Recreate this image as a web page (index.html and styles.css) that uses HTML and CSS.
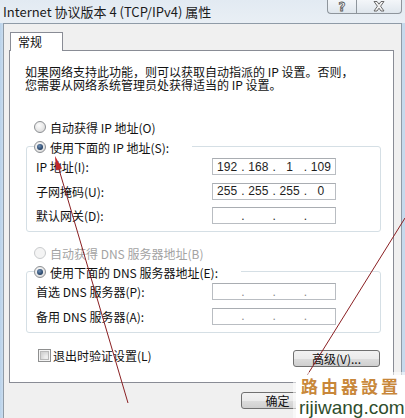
FILE: index.html
```html
<!DOCTYPE html>
<html lang="zh-CN">
<head>
    <meta charset="UTF-8">
    <meta name="viewport" content="width=device-width, initial-scale=1.0">
    <title>Internet 协议版本 4 (TCP/IPv4) 属性</title>
    <link rel="stylesheet" href="styles.css">
</head>
<body>

<div class="window">

    <!-- Title bar -->
    <div class="titlebar">
        <span class="title">Internet 协议版本 4 (TCP/IPv4) 属性</span>
        <div class="caption-btns">
            <span class="cap-btn help">?</span>
            <span class="cap-btn close">
                <svg width="12" height="11" viewBox="0 0 12 11">
                    <path d="M1 0.5 L4 0.5 L6 3.2 L8 0.5 L11 0.5 L7.6 5.2 L11 10 L8 10 L6 7.2 L4 10 L1 10 L4.4 5.2 Z" fill="#f2f2f2" stroke="#5c5c5c" stroke-width="0.9"/>
                </svg>
            </span>
        </div>
    </div>

    <div class="frame">
        <div class="tabs"><span class="tab">常规</span></div>

        <div class="panel">
            <p class="intro">如果网络支持此功能，则可以获取自动指派的 IP 设置。否则，<br>您需要从网络系统管理员处获得适当的 IP 设置。</p>

            <div class="choice">
                <span class="radio"></span>自动获得 IP 地址(O)
            </div>

            <!-- Manual IP group -->
            <div class="group">
                <div class="group-head">
                    <span class="radio checked"></span>使用下面的 IP 地址(S):
                </div>
                <div class="field first">
                    <span>IP 地址(I):</span>
                    <div class="ip"><span>192</span><i>.</i><span>168</span><i>.</i><span>1</span><i>.</i><span>109</span></div>
                </div>
                <div class="field">
                    <span>子网掩码(U):</span>
                    <div class="ip"><span>255</span><i>.</i><span>255</span><i>.</i><span>255</span><i>.</i><span>0</span></div>
                </div>
                <div class="field">
                    <span>默认网关(D):</span>
                    <div class="ip"><span></span><i>.</i><span></span><i>.</i><span></span><i>.</i><span></span></div>
                </div>
            </div>

            <div class="choice dns-auto disabled">
                <span class="radio"></span>自动获得 DNS 服务器地址(B)
            </div>

            <!-- Manual DNS group -->
            <div class="group dns">
                <div class="group-head">
                    <span class="radio checked"></span>使用下面的 DNS 服务器地址(E):
                </div>
                <div class="field first">
                    <span>首选 DNS 服务器(P):</span>
                    <div class="ip empty"><span></span><i>.</i><span></span><i>.</i><span></span><i>.</i><span></span></div>
                </div>
                <div class="field">
                    <span>备用 DNS 服务器(A):</span>
                    <div class="ip empty"><span></span><i>.</i><span></span><i>.</i><span></span><i>.</i><span></span></div>
                </div>
            </div>

            <div class="bottom-row">
                <label class="check"><span class="box"></span>退出时验证设置(L)</label>
                <button class="btn adv">高级(V)...</button>
            </div>
        </div>

        <!-- the cancel button sits under the watermark -->
        <div class="footer">
            <button class="btn">确定</button>
            <button class="btn" aria-label="取消"></button>
        </div>
    </div>

    <!-- Annotation arrows drawn over the screenshot -->
    <svg class="arrows" width="405" height="418" viewBox="0 0 405 418">
        <line x1="58" y1="166" x2="128" y2="403" stroke="#8a1f22" stroke-width="1"/>
        <polygon points="55,156 62,168.6 56,170.3" fill="#c0282a"/>
        <line x1="405" y1="218" x2="298" y2="390" stroke="#8a1f22" stroke-width="1"/>
    </svg>

    <!-- Site watermark -->
    <div class="watermark">
        <span class="wm-cn">路由器設置</span>
        <span class="wm-en">rijiwang.com</span>
    </div>

</div>

</body>
</html>
```

FILE: styles.css
```css
* {
    box-sizing: border-box;
}

body {
    margin: 0;
    font-family: "Noto Sans CJK SC", "Noto Sans CJK TC", sans-serif;
    font-size: 12px;
    color: #111;
}

/* Window with glass edges */
.window {
    position: relative;
    width: 405px;
    height: 418px;
    overflow: hidden;
    background: linear-gradient(90deg, #b9d2ea 0, #c9dcef 3px, #e8eef4 3px, #e8eef4 402px, #c6d9ec 402px);
}

/* Title bar */
.titlebar {
    display: flex;
    align-items: flex-start;
    height: 23px;
    padding-left: 3px;
    background: linear-gradient(180deg, #e2eaf2, #e9eff5);
}

.title {
    font-size: 13px;
    line-height: 24px;
    color: #1b1b1b;
}

.caption-btns {
    display: flex;
    margin-left: auto;
    margin-right: 3px;
}

.cap-btn {
    display: flex;
    align-items: center;
    justify-content: center;
    height: 14px;
    border: 1px solid #8e959c;
    border-top: none;
    background: linear-gradient(180deg, #f3f6f9, #dfe6ed);
}

.cap-btn.help {
    width: 29px;
    border-right: none;
    border-radius: 0 0 0 4px;
    font-family: "DejaVu Sans", sans-serif;
    font-size: 12px;
    font-weight: bold;
    line-height: 14px;
    color: #f4f4f4;
    -webkit-text-stroke: 0.8px #555;
}

.cap-btn.close {
    width: 46px;
    border-radius: 0 0 4px 0;
}

/* Dialog frame */
.frame {
    margin: 0 3px;
    height: 400px;
    padding: 8px 7px 0 5px;
    background: #f0f0f0;
    border: 1px solid #8f9ba7;
}

.tabs {
    display: flex;
}

.tab {
    position: relative;
    z-index: 1;
    width: 53px;
    height: 19px;
    margin: 0 0 -1px 1px;
    padding: 1px 0 0 7px;
    line-height: 15px;
    background: #fff;
    border: 1px solid #898c95;
    border-bottom: none;
}

.panel {
    padding: 14px 12px 15px 15px;
    background: #fff;
    border: 1px solid #898c95;
}

.intro {
    margin: 0;
    line-height: 13px;
    white-space: nowrap;
}

/* Radio rows */
.choice,
.group-head {
    display: flex;
    align-items: center;
    gap: 4px;
    height: 16px;
    white-space: nowrap;
}

.choice {
    margin-top: 28px;
    padding-left: 9px;
}

.choice.dns-auto {
    margin-top: 13px;
}

.disabled {
    color: #a3a3a3;
}

.radio {
    position: relative;
    width: 12px;
    height: 12px;
    border-radius: 50%;
    border: 1px solid #8c8f93;
    background: radial-gradient(circle at 40% 35%, #fdfdfd, #dcdcdc 80%);
}

.disabled .radio {
    border-color: #c9cbcd;
    background: #f4f4f4;
}

.radio.checked::after {
    content: "";
    position: absolute;
    left: 2px;
    top: 2px;
    width: 6px;
    height: 6px;
    border-radius: 50%;
    background: radial-gradient(circle at 40% 35%, #6f8fb5, #1d3a5e 75%);
}

/* Group boxes */
.group {
    margin: 11px 0 0 1px;
    padding: 0 9px 7px;
    border: 1px solid #d5dfe5;
    border-radius: 3px;
}

.group.dns {
    margin-top: 10px;
}

.group-head {
    width: fit-content;
    margin: -8px 0 0 -2px;
    padding-right: 23px;
    background: #fff;
}

.field {
    display: grid;
    grid-template-columns: 176px 124px;
    align-items: center;
    height: 17px;
    margin-top: 7.5px;
}

.field.first {
    margin-top: 3px;
}

/* IP address boxes */
.ip {
    display: flex;
    align-items: center;
    height: 17px;
    background: #fff;
    border: 1px solid #b9bdc2;
    border-top-color: #a9adb2;
    font-family: "Liberation Sans", Arial, sans-serif;
    font-size: 12px;
    color: #1e1e1e;
}

.ip span {
    flex: 1;
    text-align: center;
}

.ip i {
    width: 3px;
    font-style: normal;
    text-align: center;
}

.ip.empty i {
    color: #8a8a8a;
}

/* Bottom row */
.bottom-row {
    display: flex;
    justify-content: space-between;
    align-items: flex-start;
    margin-top: 16px;
}

.check {
    display: flex;
    align-items: center;
    gap: 2px;
    height: 13px;
    margin-left: 13px;
}

.box {
    width: 13px;
    height: 13px;
    border: 1px solid #8e8f8f;
    background: #f6f6f6;
    box-shadow: inset 0 0 0 1px #f4f4f4, inset 0 0 0 2px #b9b9b9, inset 2px 2px 4px 2px #cfcfcf;
}

.btn {
    height: 17px;
    padding: 0;
    font-family: inherit;
    font-size: 12px;
    line-height: 15px;
    color: #111;
    border: 1px solid #707070;
    border-radius: 3px;
    background: linear-gradient(180deg, #f2f2f2 0%, #ebebeb 50%, #dddddd 51%, #cfcfcf 100%);
}

.btn.adv {
    width: 87px;
    margin: 1px 1px 0 0;
}

.footer {
    display: flex;
    justify-content: flex-end;
    gap: 7px;
    margin-top: 9px;
}

.footer .btn {
    width: 73px;
}

/* Overlays */
.arrows {
    position: absolute;
    left: 0;
    top: 0;
    pointer-events: none;
}

.watermark {
    position: absolute;
    left: 296px;
    top: 375px;
    width: 109px;
    height: 43px;
    display: flex;
    flex-direction: column;
    align-items: flex-start;
    padding: 0 0 0 5px;
    background: #fff;
    box-shadow: 0 0 0 3px rgba(255, 255, 255, 0.55);
}

.wm-cn {
    font-family: "Noto Sans CJK TC", "Noto Sans CJK SC", sans-serif;
    font-size: 17px;
    font-weight: bold;
    line-height: 22px;
    letter-spacing: 3px;
    color: #c8873a;
}

.wm-en {
    margin-left: -2px;
    font-family: "Liberation Sans", Arial, sans-serif;
    font-size: 19px;
    line-height: 21px;
    color: #2e4d2c;
}
```
